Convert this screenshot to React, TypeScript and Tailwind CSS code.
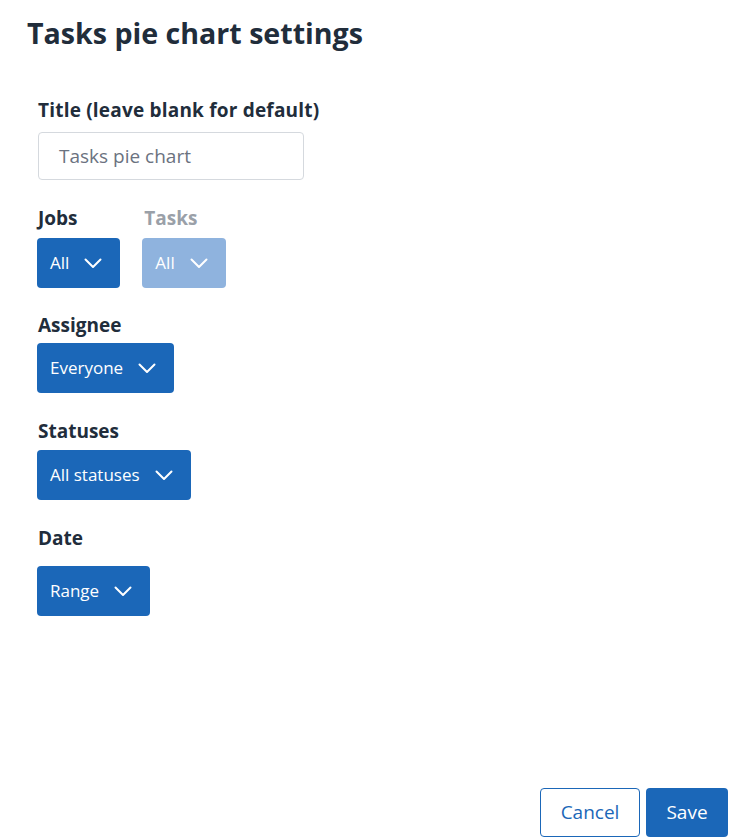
import React from "react";

const Chevron = () => (
  <svg width="18" height="11" viewBox="0 0 18 11" fill="none" className="shrink-0">
    <path d="M1.5 1.5 L9 9 L16.5 1.5" stroke="white" strokeWidth="2" strokeLinecap="round" strokeLinejoin="round" />
  </svg>
);

const Drop = ({ label, light = false }: { label: string; light?: boolean }) => (
  <button
    className={`h-[50px] flex items-center gap-[15px] pl-[13px] pr-[18px] rounded-[4px] text-white text-[17px] ${
      light ? "bg-[#8fb3de]" : "bg-[#1b67b8]"
    }`}
  >
    <span>{label}</span>
    <Chevron />
  </button>
);

export default function App() {
  return (
    <div
      className="w-[751px] h-[840px] bg-white relative text-[#212d3b]"
      style={{ fontFamily: '"Open Sans", "Noto Sans", sans-serif' }}
    >
      <div className="pl-[27px] pt-[13px]">
        <h1 className="text-[28.6px] font-bold leading-[40px]">Tasks pie chart settings</h1>
      </div>
      <div className="pl-[38px] pt-[45px] flex flex-col">
        <label className="text-[19px] font-bold leading-[24px] tracking-[0.2px]">Title (leave blank for default)</label>
        <div className="mt-[10px] w-[266px] h-[48px] border border-[#d5d9de] rounded-[4px] flex items-center pl-[20px] text-[19px] text-[#6b7280]">
          Tasks pie chart
        </div>

        <div className="mt-[26px] flex gap-[22px] -ml-px">
          <div className="flex flex-col">
            <label className="text-[19px] font-bold leading-[24px] pl-px">Jobs</label>
            <div className="mt-[8px]">
              <Drop label="All" />
            </div>
          </div>
          <div className="flex flex-col">
            <label className="text-[19px] font-bold leading-[24px] pl-[2px] text-[#9aa0a8]">Tasks</label>
            <div className="mt-[8px]">
              <Drop label="All" light />
            </div>
          </div>
        </div>

        <label className="mt-[25px] text-[19px] font-bold leading-[24px]">Assignee</label>
        <div className="mt-[6px] -ml-px">
          <Drop label="Everyone" />
        </div>

        <label className="mt-[26px] text-[19px] font-bold leading-[24px]">Statuses</label>
        <div className="mt-[7px] -ml-px">
          <Drop label="All statuses" />
        </div>

        <label className="mt-[26px] text-[19px] font-bold leading-[24px]">Date</label>
        <div className="mt-[16px] -ml-px">
          <Drop label="Range" />
        </div>
      </div>

      <div className="absolute right-[23px] bottom-[3px] flex gap-[6px]">
        <button className="w-[100px] h-[49px] border border-[#1b67b8] rounded-[4px] text-[#1b67b8] text-[19px] bg-white">
          Cancel
        </button>
        <button className="w-[82px] h-[49px] rounded-[4px] bg-[#1b67b8] text-white text-[19px]">Save</button>
      </div>
    </div>
  );
}
